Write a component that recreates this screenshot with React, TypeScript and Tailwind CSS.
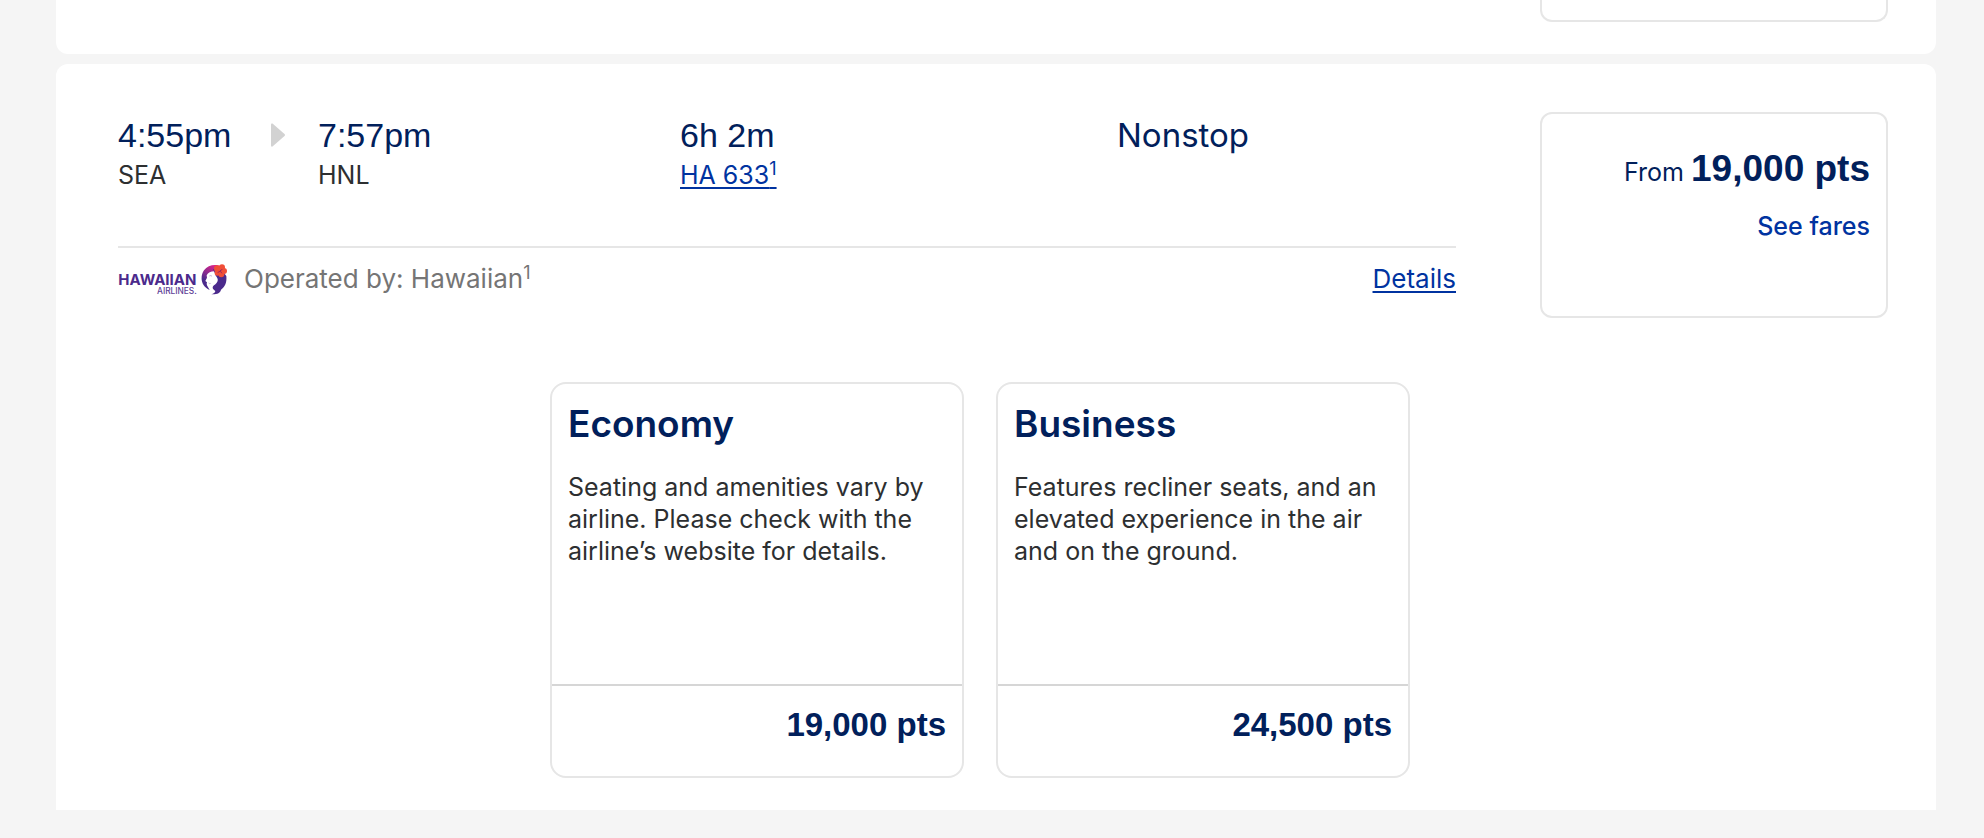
const NAVY = "text-[#01205b]";
const FIGURES = "font-['Liberation_Sans',sans-serif]";

const CABINS = [
  {
    name: "Economy",
    description:
      "Seating and amenities vary by airline. Please check with the airline’s website for details.",
    price: "19,000 pts",
  },
  {
    name: "Business",
    description:
      "Features recliner seats, and an elevated experience in the air and on the ground.",
    price: "24,500 pts",
  },
];

function HawaiianLogo() {
  return (
    <svg
      viewBox="24 22 330 93"
      className="h-[31px] w-[110px] shrink-0"
      role="img"
      aria-label="Hawaiian Airlines"
    >
      <defs>
        <linearGradient id="hair" x1="0.7" y1="0" x2="0.3" y2="1">
          <stop offset="0" stopColor="#e0218a" />
          <stop offset="0.4" stopColor="#8e2a8f" />
          <stop offset="0.7" stopColor="#4b2a8c" />
        </linearGradient>
      </defs>
      <text x="25" y="84" fontFamily="Inter, sans-serif" fontSize="45" fontWeight="700" fill="#4b2a8c">
        HAWAIIAN
      </text>
      <text x="141" y="112" fontFamily="Inter, sans-serif" fontSize="25" fontWeight="500" fill="#5d4096">
        AIRLINES.
      </text>
      {/* Outer crescent */}
      <path
        d="M336 30 C318 21 294 24 282 41 C269 61 273 88 299 100 C295 93 291 88 290 82 L291 77 L286 73 L291 63 L290 56 C294 48 302 44 314 44 Z"
        fill="url(#hair)"
      />
      {/* Hair falling behind the face */}
      <path
        d="M309 38 C315 47 314 54 320 61 C327 70 322 80 312 86 C305 92 308 98 316 103 C315 108 311 111 304 113 C322 114 331 108 333 99 C345 91 351 77 349 58 L334 38 Z"
        fill="#4b2a8c"
      />
      <path d="M298 58 C301 56 304 57 306 59 M296 79 C298 81 300 81 302 80" stroke="#a58fc0" strokeWidth="2" fill="none" />
      {/* Hibiscus */}
      <g fill="#f04e37">
        <circle cx="322" cy="36" r="10" />
        <circle cx="336" cy="32" r="9" />
        <circle cx="342" cy="43" r="9" />
        <circle cx="334" cy="53" r="9" />
        <circle cx="322" cy="49" r="8" />
      </g>
      <path d="M330 44 L324 47 M331 43 L336 38 M332 45 L335 49" stroke="#a3265c" strokeWidth="3" strokeLinecap="round" />
    </svg>
  );
}

function Airport({ time, code }: { time: string; code: string }) {
  return (
    <div>
      <div className={`text-[34px] leading-[46px] ${FIGURES} ${NAVY}`}>{time}</div>
      <div className="text-[25px] leading-[34px]">{code}</div>
    </div>
  );
}

function FlightSummary() {
  return (
    <div className="min-w-0 flex-1">
      <div className="grid grid-cols-[562fr_437fr_339fr] border-b-2 border-[#e6e6e6] pb-[54px]">
        <div className="grid grid-cols-[153px_47px_1fr]">
          <Airport time="4:55pm" code="SEA" />
          <svg viewBox="0 0 14 24" className="mt-[11px] h-6 w-[14px]" aria-hidden="true">
            <path d="M0 1.5 Q0 0 1.5 0.5 L13.5 11 Q14.5 12 13.5 13 L1.5 23.5 Q0 24 0 22.5 Z" fill="#d2d2d2" />
          </svg>
          <Airport time="7:57pm" code="HNL" />
        </div>
        <div>
          <div className={`text-[34px] leading-[46px] ${FIGURES} ${NAVY}`}>6h 2m</div>
          <a
            href="#flight"
            className="block w-fit text-[25px] leading-[34px] text-[#0033a0] underline decoration-2 underline-offset-3"
          >
            HA 633<sup className="text-lg">1</sup>
          </a>
        </div>
        <div className={`text-[33px] leading-[46px] ${NAVY}`}>Nonstop</div>
      </div>

      <div className="flex items-center pt-[14px] text-[26px] leading-[34px]">
        <HawaiianLogo />
        <span className="ml-4 text-[#757575]">
          Operated by: Hawaiian<sup className="text-lg">1</sup>
        </span>
        <a href="#details" className="ml-auto text-[#0033a0] underline decoration-2 underline-offset-3">
          Details
        </a>
      </div>
    </div>
  );
}

function FareBox() {
  return (
    <div className="flex h-[206px] w-[348px] shrink-0 flex-col items-end rounded-xl border-2 border-[#e6e6e6] px-4 pt-8">
      <div className={`text-[25px] leading-[46px] ${NAVY}`}>
        From <span className={`text-[37px] font-bold ${FIGURES}`}>19,000 pts</span>
      </div>
      <button type="button" className="mt-[14px] text-[25px] leading-[34px] font-medium text-[#0033a0]">
        See fares
      </button>
    </div>
  );
}

function CabinCard({ name, description, price }: (typeof CABINS)[number]) {
  return (
    <article className="flex h-[396px] w-[414px] flex-col rounded-2xl border-2 border-[#e6e6e6]">
      <div className="flex-1 px-4 pt-[17px]">
        <h2 className={`text-[37px] leading-[46px] font-semibold ${NAVY}`}>{name}</h2>
        <p className="mt-6 text-[25px] leading-8">{description}</p>
      </div>
      <button
        type="button"
        className={`h-[92px] border-t-2 border-[#d6d6d6] px-4 pb-3 text-right text-[33px] leading-[46px] font-bold ${FIGURES} ${NAVY}`}
      >
        {price}
      </button>
    </article>
  );
}

export default function App() {
  return (
    <main className="min-h-screen bg-[#f5f5f5] pr-12 pb-7 pl-14 font-['Inter',sans-serif] text-[#2d2f31]">
      {/* Tail end of the previous result */}
      <section className="flex justify-end rounded-b-xl bg-white pr-12 pb-8">
        <div className="h-[22px] w-[348px] rounded-b-xl border-2 border-t-0 border-[#e6e6e6]" />
      </section>

      <section className="mt-[10px] rounded-t-xl bg-white pt-12 pb-8">
        <div className="flex gap-[84px] pr-12 pl-[62px]">
          <FlightSummary />
          <FareBox />
        </div>
        <div className="mt-16 flex justify-center gap-8 pr-8">
          {CABINS.map((cabin) => (
            <CabinCard key={cabin.name} {...cabin} />
          ))}
        </div>
      </section>
    </main>
  );
}
